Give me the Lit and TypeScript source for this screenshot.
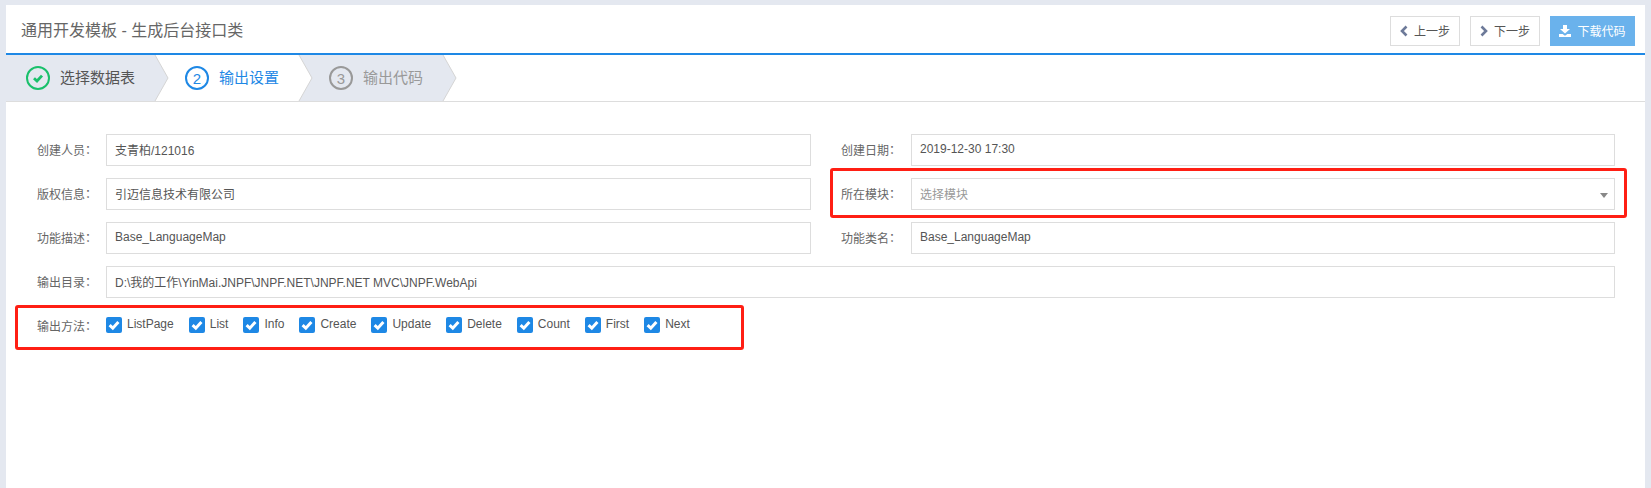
import { LitElement, html, css } from "lit";
import { customElement } from "lit/decorators.js";

const check = html`<svg class="cbicon" viewBox="0 0 16 16"><path d="M3.6 8.2 6.8 11.2 12.4 5" fill="none" stroke="#fff" stroke-width="3"/></svg>`;

@customElement("app-root")
export class AppRoot extends LitElement {
  static styles = css`
    :host { display: block; height: 488px; background: #e4e8f0; padding: 5px 6px 0; box-sizing: border-box; overflow: hidden; position: relative;
      font-family: "Liberation Sans", "Noto Sans CJK SC", sans-serif; font-size: 12px; color: #555; }
    .panel { background: #fff; height: 483px; }
    .head { height: 48px; border-bottom: 2px solid #1e88e5; display: flex; align-items: center; justify-content: space-between; padding: 0 10px 0 15px; }
    .title { font-size: 16px; color: #666; }
    .btns { display: flex; gap: 10px; margin-top: 4px; }
    .btn { height: 30px; box-sizing: border-box; border: 1px solid #ddd; background: #fff; display: flex; align-items: center; justify-content: center; gap: 6px; color: #555; font-size: 12px; padding-bottom: 1px; }
    .prev { width: 70px; } .next { width: 70px; }
    .dl { width: 85px; background: #6ab2ec; border-color: #6ab2ec; color: #fff; }
    .steps { height: 46px; border-bottom: 1px solid #ddd; display: flex; box-sizing: content-box; }
    .step { width: 144px; height: 46px; position: relative; display: flex; align-items: center; gap: 10px; box-sizing: border-box; font-size: 15px; }
    .step svg.bg { position: absolute; left: 0; top: 0; width: 144px; height: 46px; overflow: visible; }
    .step > .c { position: relative; box-sizing: border-box; width: 24px; height: 24px; border-radius: 50%; border: 2px solid; display: flex; align-items: center; justify-content: center; font-size: 15px; flex: none; }
    .step > span { position: relative; padding-bottom: 3px; }
    .s1 { padding-left: 20px; color: #555; z-index: 3; } .s1 .c { border-color: #19c06b; }
    .s2 { padding-left: 35px; color: #1e88e5; z-index: 2; } .s2 .c { border-color: #1e88e5; }
    .s3 { padding-left: 35px; color: #999; z-index: 1; } .s3 .c { border-color: #999; }
    .form { padding: 32px 0 0 15px; }
    .row { display: flex; height: 32px; margin-bottom: 12px; align-items: stretch; }
    .cell { display: flex; align-items: center; }
    .left { width: 810px; }
    .right { width: 784px; }
    .lab { width: 85px; padding: 0 0 2px 16px; box-sizing: border-box; flex: none; color: #666; }
    .rlab { width: 80px; padding: 0 0 2px 10px; box-sizing: border-box; flex: none; color: #666; }
    .colon { font-family: "Noto Sans CJK TC", sans-serif; margin-left: -3px; }
    .inp { flex: 1; height: 32px; box-sizing: border-box; border: 1px solid #ddd; display: flex; align-items: center; padding: 0 8px 2px; color: #555; position: relative; }
    .left .inp { margin-right: 20px; }
    .ph { color: #999; }
    .caret { position: absolute; right: 6px; top: 14px; width: 0; height: 0; border-left: 4px solid transparent; border-right: 4px solid transparent; border-top: 5px solid #888; }
    .full { width: 1594px; }
    .checks { display: flex; align-items: center; height: 32px; margin-top: -3px; }
    .cb { display: flex; align-items: center; margin-right: 15px; gap: 5px; color: #555; }
    .cb span { padding-bottom: 2px; }
    .box { width: 16px; height: 16px; border-radius: 2px; background: #1e88e5; flex: none; }
    .cbicon { display: block; width: 16px; height: 16px; }
    .red { position: absolute; border: 3px solid #ff1f14; border-radius: 3px; box-sizing: border-box; pointer-events: none; }
    .r1 { left: 830px; top: 168px; width: 797px; height: 50px; }
    .r2 { left: 15px; top: 305px; width: 729px; height: 45px; }
  `;
  private label(l: string, cls: string) {
    return html`<div class="${cls}">${l}<span class="colon">：</span></div>`;
  }
  private field(l: string, v: string) {
    return html`<div class="cell left">${this.label(l, "lab")}<div class="inp">${v}</div></div>`;
  }
  private rfield(l: string, v: unknown) {
    return html`<div class="cell right">${this.label(l, "rlab")}<div class="inp">${v}</div></div>`;
  }
  private stepBg(fill: string) {
    return html`<svg class="bg" viewBox="0 0 144 46"><path d="M0 0H149L162 23 149 46H0Z" fill="${fill}"/><path d="M149 0 162 23 149 46" fill="none" stroke="#d5d5d5"/></svg>`;
  }
  render() {
    const items = ["ListPage", "List", "Info", "Create", "Update", "Delete", "Count", "First", "Next"];
    return html`
      <div class="panel">
        <div class="head">
          <div class="title">通用开发模板 - 生成后台接口类</div>
          <div class="btns">
            <div class="btn prev"><svg width="8" height="12" viewBox="0 0 8 12"><path d="M6.5 1.5 2 6l4.5 4.5" fill="none" stroke="#6d7a99" stroke-width="2.6"/></svg>上一步</div>
            <div class="btn next"><svg width="8" height="12" viewBox="0 0 8 12"><path d="M1.5 1.5 6 6l-4.5 4.5" fill="none" stroke="#6d7a99" stroke-width="2.6"/></svg>下一步</div>
            <div class="btn dl"><svg width="12" height="12" viewBox="0 0 12 12"><path d="M4 0h4v4h3L6 8.6 1 4h3zM0 9h3.6L6 10.8 8.4 9H12v3H0z" fill="#fff"/></svg>下载代码</div>
          </div>
        </div>
        <div class="steps">
          <div class="step s1">${this.stepBg("#e4e8f0")}<div class="c"><svg width="14" height="14" viewBox="0 0 14 14"><path d="M3 7.2 6 10 11 4.6" fill="none" stroke="#19c06b" stroke-width="2.8"/></svg></div><span>选择数据表</span></div>
          <div class="step s2">${this.stepBg("#fff")}<div class="c">2</div><span>输出设置</span></div>
          <div class="step s3">${this.stepBg("#e4e8f0")}<div class="c">3</div><span>输出代码</span></div>
        </div>
        <div class="form">
          <div class="row">${this.field("创建人员", "支青柏/121016")}${this.rfield("创建日期", "2019-12-30 17:30")}</div>
          <div class="row">${this.field("版权信息", "引迈信息技术有限公司")}${this.rfield("所在模块", html`<span class="ph">选择模块</span><i class="caret"></i>`)}</div>
          <div class="row">${this.field("功能描述", "Base_LanguageMap")}${this.rfield("功能类名", "Base_LanguageMap")}</div>
          <div class="row"><div class="cell full">${this.label("输出目录", "lab")}<div class="inp">D:\\我的工作\\YinMai.JNPF\\JNPF.NET\\JNPF.NET MVC\\JNPF.WebApi</div></div></div>
          <div class="row"><div class="cell">${this.label("输出方法", "lab")}<div class="checks">${items.map((i) => html`<div class="cb"><div class="box">${check}</div><span>${i}</span></div>`)}</div></div></div>
        </div>
      </div>
      <div class="red r1"></div>
      <div class="red r2"></div>
    `;
  }
}
